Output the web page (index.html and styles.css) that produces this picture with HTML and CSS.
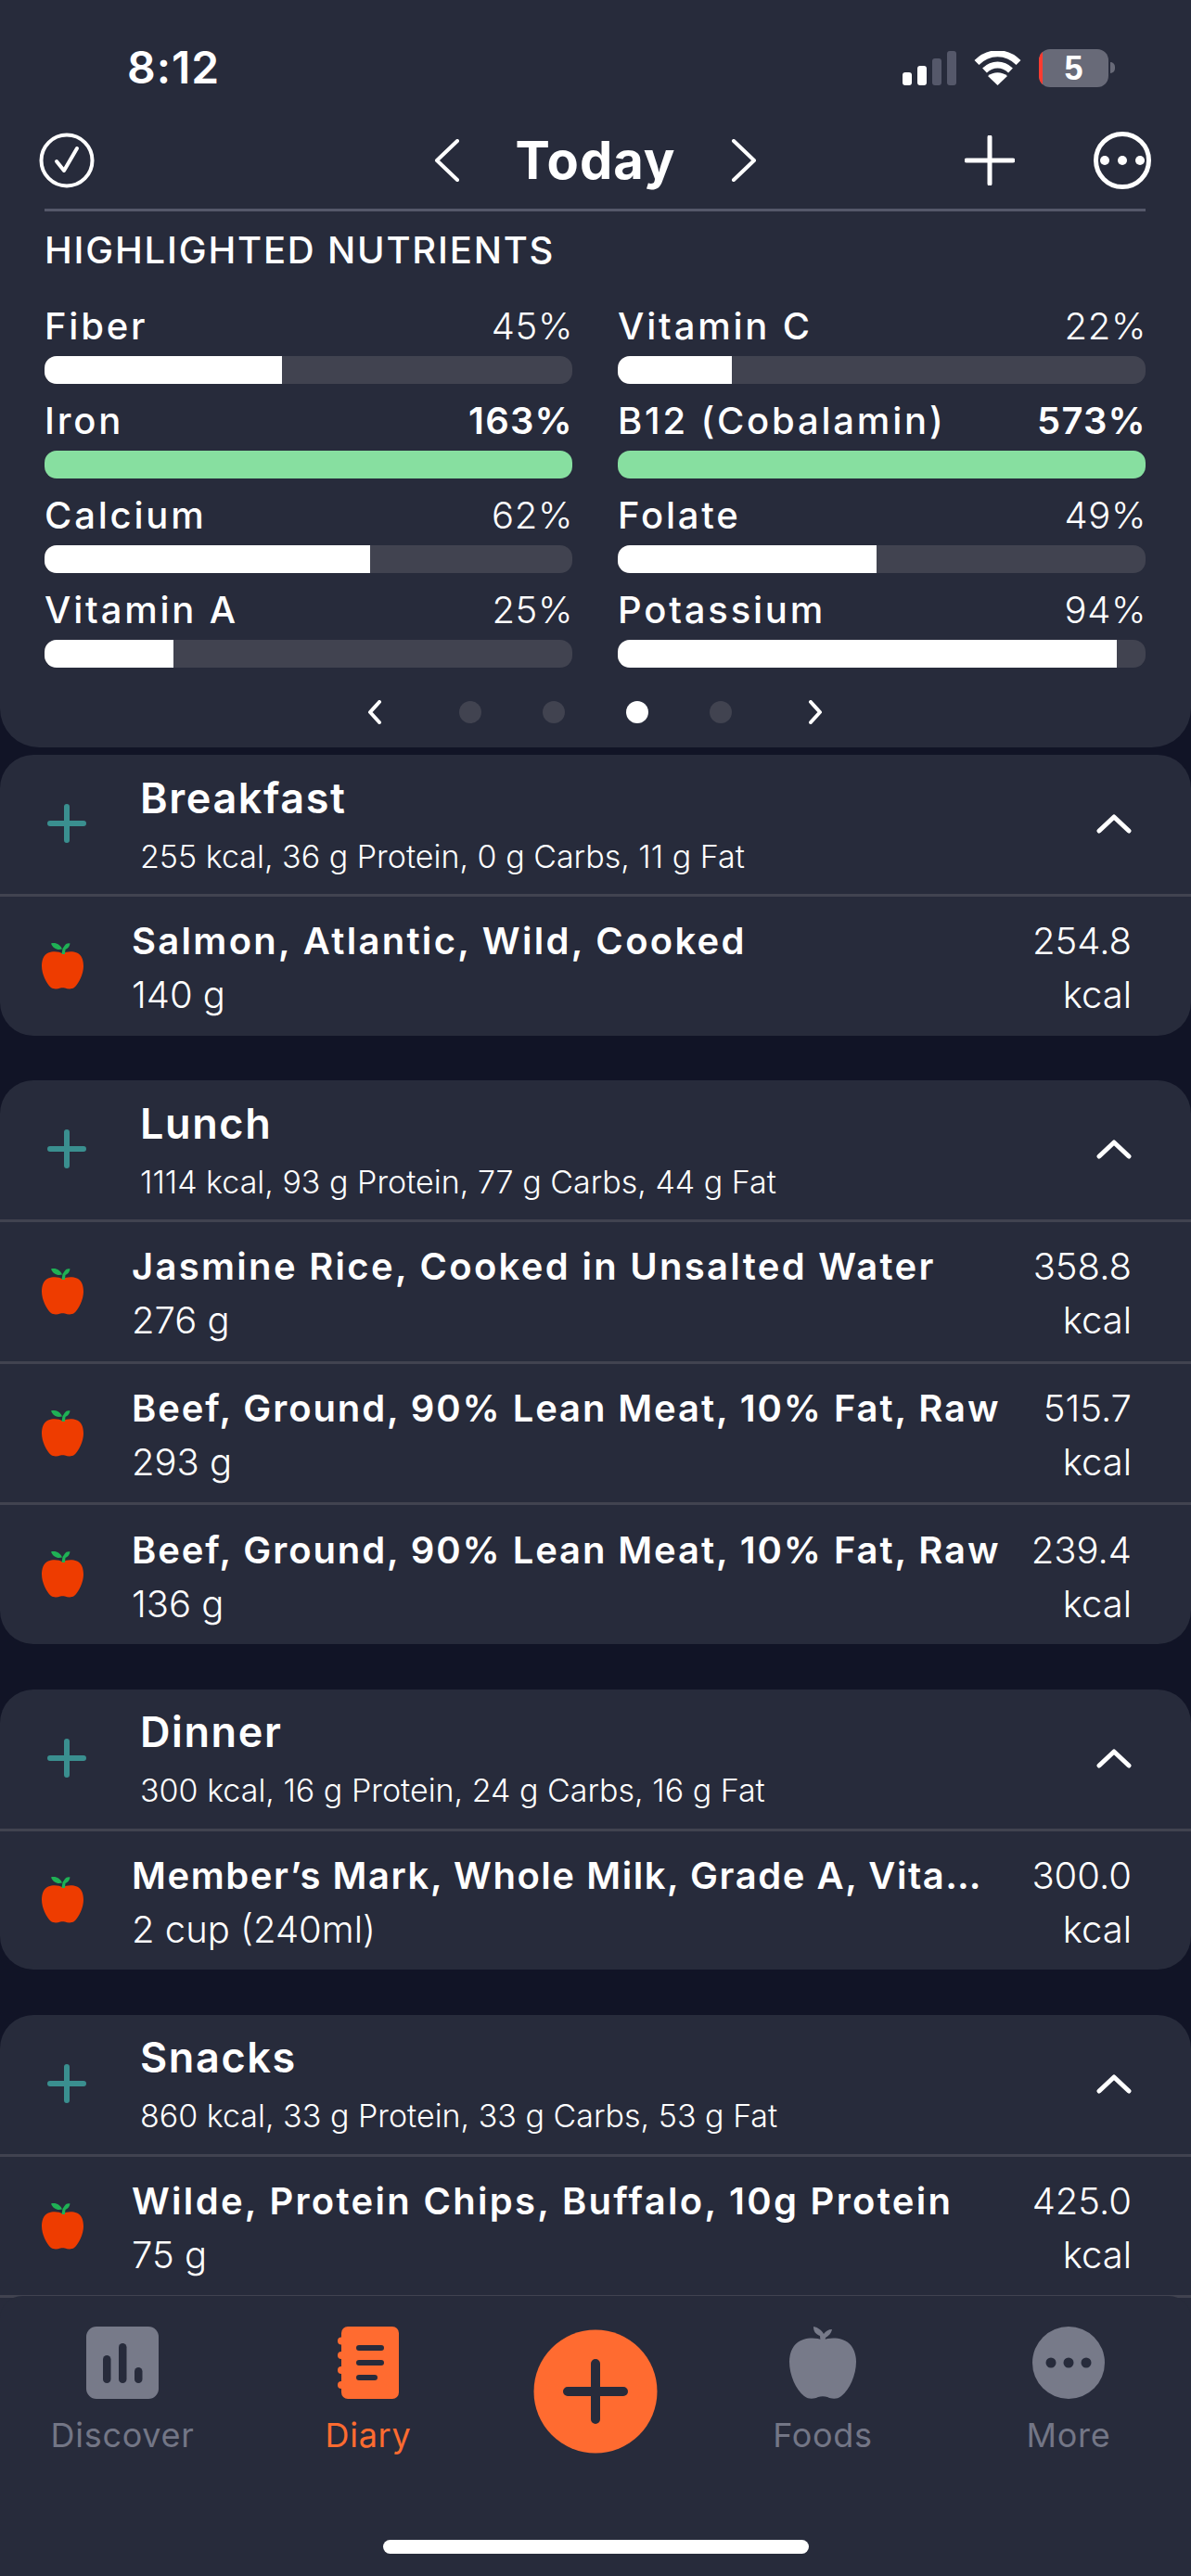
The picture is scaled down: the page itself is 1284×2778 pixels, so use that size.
FILE: index.html
```html
<!DOCTYPE html>
<html lang="en">
<head>
<meta charset="utf-8">
<title>Diary</title>
<link rel="stylesheet" href="styles.css">
</head>
<body>
<div class="screen">
  <svg width="0" height="0" class="defs">
    <defs>
      <symbol id="apple" viewBox="0 0 45 51">
        <path fill="#ee3c00" d="M22.5 12.5C19 10 12 9.5 7 11.5 2 14 0 19 0 26c0 8 5 19 10 23 3 2 7 1.500 10 .5 2-.5 3-.5 5 0 3 1 7 1.500 10-.5 5-4 10-15 10-23 0-7-2-12-7-14.500-5-2-12-1.500-15.500 1z"/>
        <path fill="#1fb155" d="M10 1.500C15 0 20 2.500 22 7.500 17 9 12 7 10 1.500zM24.500 4C26 1.500 28.500 1 30.500 1.500 30 5 28 7 25.500 8L25 13H21.500L22.500 7z"/>
      </symbol>
      <symbol id="plus" viewBox="0 0 42 42">
        <path d="M21 3V39M3 21H39" fill="none" stroke="#3a8f8f" stroke-width="6" stroke-linecap="round"/>
      </symbol>
      <symbol id="chev-up" viewBox="0 0 38 22">
        <path d="M3 19 19 4 35 19" fill="none" stroke="#fff" stroke-width="5" stroke-linecap="round" stroke-linejoin="round"/>
      </symbol>
    </defs>
  </svg>

  <section class="panel">
    <div class="status">
      <span class="clock">8:12</span>
      <div class="status-icons">
        <svg class="signal" width="58" height="37" viewBox="0 0 58 37">
          <rect x="0" y="23" width="10" height="14" rx="3" fill="#fff"/>
          <rect x="16" y="16" width="10" height="21" rx="3" fill="#fff"/>
          <rect x="32" y="8" width="10" height="29" rx="3" fill="#55586a"/>
          <rect x="48" y="0" width="10" height="37" rx="3" fill="#55586a"/>
        </svg>
        <svg class="wifi" width="51" height="37" viewBox="0 0 51 37">
          <path d="M3 12.500C16-.5 35-.5 48 12.500" fill="none" stroke="#fff" stroke-width="7"/>
          <path d="M11.500 21C20 13 31 13 39.500 21" fill="none" stroke="#fff" stroke-width="7"/>
          <path d="M25.500 37 15 27C21 22 30 22 36 27z" fill="#fff"/>
        </svg>
        <div class="battery"><span class="battery-low"></span><span class="battery-num">5</span></div>
        <span class="battery-nub"></span>
      </div>
    </div>

    <div class="nav">
      <svg class="nav-check" width="60" height="60" viewBox="0 0 60 60">
        <circle cx="30" cy="30" r="27.500" fill="none" stroke="#fff" stroke-width="4"/>
        <path d="M19 31 27 41 41 17" fill="none" stroke="#fff" stroke-width="4" stroke-linecap="round" stroke-linejoin="round"/>
      </svg>
      <div class="nav-date">
        <svg width="28" height="46" viewBox="0 0 28 46"><path d="M25 2 3 23 25 44" fill="none" stroke="#fff" stroke-width="4" stroke-linecap="round" stroke-linejoin="round"/></svg>
        <span class="today">Today</span>
        <svg width="28" height="46" viewBox="0 0 28 46"><path d="M3 2 25 23 3 44" fill="none" stroke="#fff" stroke-width="4" stroke-linecap="round" stroke-linejoin="round"/></svg>
      </div>
      <div class="nav-actions">
        <svg width="54" height="54" viewBox="0 0 54 54"><path d="M27 2V52M2 27H52" fill="none" stroke="#fff" stroke-width="5" stroke-linecap="round"/></svg>
        <svg width="64" height="64" viewBox="0 0 64 64">
          <circle cx="32" cy="32" r="28.500" fill="none" stroke="#fff" stroke-width="5"/>
          <circle cx="13" cy="32" r="5" fill="#fff"/><circle cx="32" cy="32" r="5" fill="#fff"/><circle cx="51" cy="32" r="5" fill="#fff"/>
        </svg>
      </div>
    </div>
    <div class="nav-rule"></div>

    <h2 class="section-title">HIGHLIGHTED NUTRIENTS</h2>

    <div class="nutrients">
      <div class="nutrient"><div class="n-label"><span class="n-name">Fiber</span><span class="n-pct">45%</span></div><div class="bar"><div class="fill" style="width:45%"></div></div></div>
      <div class="nutrient"><div class="n-label"><span class="n-name">Vitamin C</span><span class="n-pct">22%</span></div><div class="bar"><div class="fill" style="width:21.700%"></div></div></div>
      <div class="nutrient"><div class="n-label"><span class="n-name">Iron</span><span class="n-pct strong">163%</span></div><div class="bar"><div class="fill good" style="width:100%"></div></div></div>
      <div class="nutrient"><div class="n-label"><span class="n-name">B12 (Cobalamin)</span><span class="n-pct strong">573%</span></div><div class="bar"><div class="fill good" style="width:100%"></div></div></div>
      <div class="nutrient"><div class="n-label"><span class="n-name">Calcium</span><span class="n-pct">62%</span></div><div class="bar"><div class="fill" style="width:61.600%"></div></div></div>
      <div class="nutrient"><div class="n-label"><span class="n-name">Folate</span><span class="n-pct">49%</span></div><div class="bar"><div class="fill" style="width:49%"></div></div></div>
      <div class="nutrient"><div class="n-label"><span class="n-name">Vitamin A</span><span class="n-pct">25%</span></div><div class="bar"><div class="fill" style="width:24.500%"></div></div></div>
      <div class="nutrient"><div class="n-label"><span class="n-name">Potassium</span><span class="n-pct">94%</span></div><div class="bar"><div class="fill" style="width:94.500%"></div></div></div>
    </div>

    <div class="pager">
      <svg width="18" height="26" viewBox="0 0 18 26"><path d="M14 2 4 13 14 24" fill="none" stroke="#fff" stroke-width="4" stroke-linecap="round" stroke-linejoin="round"/></svg>
      <span class="dot"></span><span class="dot"></span><span class="dot on"></span><span class="dot"></span>
      <svg width="18" height="26" viewBox="0 0 18 26"><path d="M4 2 14 13 4 24" fill="none" stroke="#fff" stroke-width="4" stroke-linecap="round" stroke-linejoin="round"/></svg>
    </div>
  </section>

  <section class="meal">
    <header class="meal-head">
      <svg class="meal-plus" width="42" height="42"><use href="#plus"/></svg>
      <div class="meal-text"><h3>Breakfast</h3><p>255 kcal, 36 g Protein, 0 g Carbs, 11 g Fat</p></div>
      <svg class="meal-chev" width="38" height="22"><use href="#chev-up"/></svg>
    </header>
    <div class="food">
      <svg class="food-icon" width="45" height="51"><use href="#apple"/></svg>
      <div class="food-text"><div class="food-name">Salmon, Atlantic, Wild, Cooked</div><div class="food-qty">140 g</div></div>
      <div class="food-kcal">254.8<br>kcal</div>
    </div>
  </section>

  <section class="meal">
    <header class="meal-head">
      <svg class="meal-plus" width="42" height="42"><use href="#plus"/></svg>
      <div class="meal-text"><h3>Lunch</h3><p>1114 kcal, 93 g Protein, 77 g Carbs, 44 g Fat</p></div>
      <svg class="meal-chev" width="38" height="22"><use href="#chev-up"/></svg>
    </header>
    <div class="food">
      <svg class="food-icon" width="45" height="51"><use href="#apple"/></svg>
      <div class="food-text"><div class="food-name">Jasmine Rice, Cooked in Unsalted Water</div><div class="food-qty">276 g</div></div>
      <div class="food-kcal">358.8<br>kcal</div>
    </div>
    <div class="food">
      <svg class="food-icon" width="45" height="51"><use href="#apple"/></svg>
      <div class="food-text"><div class="food-name tight">Beef, Ground, 90% Lean Meat, 10% Fat, Raw</div><div class="food-qty">293 g</div></div>
      <div class="food-kcal">515.7<br>kcal</div>
    </div>
    <div class="food">
      <svg class="food-icon" width="45" height="51"><use href="#apple"/></svg>
      <div class="food-text"><div class="food-name tight">Beef, Ground, 90% Lean Meat, 10% Fat, Raw</div><div class="food-qty">136 g</div></div>
      <div class="food-kcal">239.4<br>kcal</div>
    </div>
  </section>

  <section class="meal">
    <header class="meal-head">
      <svg class="meal-plus" width="42" height="42"><use href="#plus"/></svg>
      <div class="meal-text"><h3>Dinner</h3><p>300 kcal, 16 g Protein, 24 g Carbs, 16 g Fat</p></div>
      <svg class="meal-chev" width="38" height="22"><use href="#chev-up"/></svg>
    </header>
    <div class="food">
      <svg class="food-icon" width="45" height="51"><use href="#apple"/></svg>
      <div class="food-text"><div class="food-name snug">Member’s Mark, Whole Milk, Grade A, Vita…</div><div class="food-qty">2 cup (240ml)</div></div>
      <div class="food-kcal">300.0<br>kcal</div>
    </div>
  </section>

  <section class="meal">
    <header class="meal-head">
      <svg class="meal-plus" width="42" height="42"><use href="#plus"/></svg>
      <div class="meal-text"><h3>Snacks</h3><p>860 kcal, 33 g Protein, 33 g Carbs, 53 g Fat</p></div>
      <svg class="meal-chev" width="38" height="22"><use href="#chev-up"/></svg>
    </header>
    <div class="food">
      <svg class="food-icon" width="45" height="51"><use href="#apple"/></svg>
      <div class="food-text"><div class="food-name">Wilde, Protein Chips, Buffalo, 10g Protein</div><div class="food-qty">75 g</div></div>
      <div class="food-kcal">425.0<br>kcal</div>
    </div>
    <div class="food"></div>
  </section>

  <nav class="tabbar">
    <div class="tab">
      <svg width="78" height="78" viewBox="0 0 78 78">
        <rect width="78" height="78" rx="11" fill="#777a89"/>
        <rect x="18" y="31" width="8.500" height="30" rx="4.250" fill="#272b3b"/>
        <rect x="35" y="18" width="8.500" height="43" rx="4.250" fill="#272b3b"/>
        <rect x="52" y="44" width="8.500" height="17" rx="4.250" fill="#272b3b"/>
      </svg>
      <span>Discover</span>
    </div>
    <div class="tab active">
      <svg width="66" height="78" viewBox="0 0 66 78">
        <rect x="4" width="62" height="78" rx="7" fill="#ff6b30"/>
        <circle cx="4" cy="15.500" r="4" fill="#ff6b30"/><circle cx="4" cy="31" r="4" fill="#ff6b30"/><circle cx="4" cy="47" r="4" fill="#ff6b30"/><circle cx="4" cy="63" r="4" fill="#ff6b30"/>
        <path d="M23 23H47M23 39H47M23 55H40" fill="none" stroke="#272b3b" stroke-width="6" stroke-linecap="round"/>
      </svg>
      <span>Diary</span>
    </div>
    <div class="tab-add">
      <svg width="134" height="134" viewBox="0 0 134 134">
        <circle cx="67" cy="67" r="66.500" fill="#ff6b30"/>
        <path d="M67 37V97M37 67H97" fill="none" stroke="#272b3b" stroke-width="10" stroke-linecap="round"/>
      </svg>
    </div>
    <div class="tab">
      <svg width="72" height="78" viewBox="0 0 72 78">
        <path fill="#777a89" d="M36 15C30 12 22 12 15 14 5 17 0 27 0 38c0 14 7 30 16 37 5 4 11 3 15 1 3-1 7-1 10 0 4 2 10 3 15-1 9-7 16-23 16-37 0-11-5-21-15-24-7-2-15-2-21 1z"/>
        <path fill="#777a89" d="M33.500 16 33 10C28 8 26 5 26 0 31 1 35 4 37 8 39 5 42 3 46 3 45 8 42 10 39 12L38.500 16z"/>
      </svg>
      <span>Foods</span>
    </div>
    <div class="tab">
      <svg width="78" height="78" viewBox="0 0 78 78">
        <circle cx="39" cy="39" r="39" fill="#777a89"/>
        <circle cx="20" cy="39" r="5.500" fill="#272b3b"/><circle cx="39" cy="39" r="5.500" fill="#272b3b"/><circle cx="58" cy="39" r="5.500" fill="#272b3b"/>
      </svg>
      <span>More</span>
    </div>
    <div class="home-bar"></div>
  </nav>
</div>
</body>
</html>
```

FILE: styles.css
```css
* { box-sizing: border-box; }
html, body { margin: 0; padding: 0; }
body { width: 1284px; height: 2778px; overflow: hidden; background: #111426; font-family: "Inter", "Liberation Sans", sans-serif; color: #fff; }
h2, h3, p { margin: 0; font-weight: normal; }

.screen { position: relative; width: 1284px; height: 2778px; overflow: hidden; }
.defs { position: absolute; }

.panel { height: 806px; background: #272b3b; border-radius: 0 0 42px 42px; margin-bottom: 8px; padding-top: 46px; }

.status { display: flex; align-items: center; justify-content: space-between; height: 54px; padding: 0 82px 0 138px; }
.clock { font-size: 48px; font-weight: 600; line-height: 54px; letter-spacing: 1px; margin-left: -1px; }
.status-icons { display: flex; align-items: center; }
.wifi { margin-left: 19px; }
.battery { position: relative; width: 75px; height: 41px; margin-left: 19px; background: #686a78; border-radius: 12px; overflow: hidden; display: flex; align-items: center; justify-content: center; }
.battery-low { position: absolute; left: 0; top: 0; bottom: 0; width: 4px; background: #ff3b30; }
.battery-num { font-family: "Liberation Sans", sans-serif; font-weight: 700; font-size: 36px; line-height: 41px; }
.battery-nub { width: 5px; height: 12px; margin-left: 2px; background: #686a78; border-radius: 0 6px 6px 0; }

.nav { display: flex; align-items: center; justify-content: space-between; height: 74px; margin-top: 36px; padding: 0 42px; }
.nav-date { display: flex; align-items: center; gap: 60px; margin-left: 142px; }
.today { font-size: 56px; font-weight: 700; line-height: 74px; letter-spacing: 1px; }
.nav-actions { display: flex; align-items: center; gap: 84px; }
.nav-rule { height: 3px; margin: 15px 49px 0 48px; background: #55586a; }

.section-title { font-size: 40px; font-weight: 500; line-height: 46px; margin: 19px 0 0 48px; letter-spacing: 1.8px; }

.nutrients { display: grid; grid-template-columns: 569px 569px; column-gap: 49px; row-gap: 0; margin: 36px 0 0 48px; }
.nutrient { height: 102px; }
.n-label { display: flex; justify-content: space-between; align-items: baseline; height: 46px; line-height: 46px; font-size: 40px; }
.n-name { font-weight: 500; letter-spacing: 2.8px; }
.n-pct { font-weight: 300; letter-spacing: .6px; margin-right: -1px; }
.n-pct.strong { font-weight: 600; letter-spacing: 1.2px; }
.bar { height: 30px; margin-top: 9px; background: #414350; border-radius: 13px; overflow: hidden; }
.fill { height: 100%; background: #fff; }
.fill.good { background: #87dfa0; }

.pager { display: flex; align-items: center; margin: 18px 0 0 395px; height: 26px; }
.dot { width: 24px; height: 24px; border-radius: 50%; background: #414350; margin-right: 66px; }
.dot.on { background: #fff; }
.pager svg:first-child { margin-right: 82px; }
.pager svg:last-child { margin-left: 15px; }

.meal { background: #272b3b; border-radius: 36px; margin-bottom: 48.500px; overflow: hidden; }
.meal-head { display: flex; align-items: center; height: 150px; padding: 0 67px 0 51px; }
.meal-plus { flex: none; margin-top: -2px; }
.meal-text { flex: 1; margin-left: 58px; }
.meal-text h3 { font-size: 45px; font-weight: 600; line-height: 54px; letter-spacing: 1.6px; margin-top: 1px; }
.meal-text p { font-size: 34px; font-weight: 300; line-height: 44px; margin-top: 14px; letter-spacing: 0; }
.meal-chev { flex: none; margin-right: -3px; margin-top: -2px; }

.food { display: flex; align-items: center; height: 152.670px; border-top: 3px solid #414350; padding: 5px 64px 0 45px; }
.food-icon { flex: none; margin-top: -6px; }
.food-text { flex: 1; min-width: 0; margin-left: 52px; }
.food-name { font-size: 40px; font-weight: 600; line-height: 58px; letter-spacing: 2.3px; white-space: nowrap; }
.food-name.tight { letter-spacing: 1.9px; }
.food-name.snug { letter-spacing: 1.55px; }
.food-qty { font-size: 40px; font-weight: 300; line-height: 58px; }
.food-kcal { flex: none; text-align: right; font-size: 40px; font-weight: 300; line-height: 58px; }

.tabbar { position: absolute; left: 0; right: 0; bottom: 0; height: 302px; background: #272b3b; border-radius: 24px 24px 0 0; display: grid; grid-template-columns: 264px 266px 224px 266px 264px; align-items: start; padding-top: 33px; }
.tab { display: flex; flex-direction: column; align-items: center; color: #737686; font-size: 36px; line-height: 44px; letter-spacing: .7px; }
.tab span { margin-top: 17px; }
.tab.active { color: #ff6b30; }
.tab-add { display: flex; justify-content: center; padding-top: 3px; }
.home-bar { position: absolute; left: 413px; bottom: 24px; width: 459px; height: 15px; background: #fff; border-radius: 8px; }
```
